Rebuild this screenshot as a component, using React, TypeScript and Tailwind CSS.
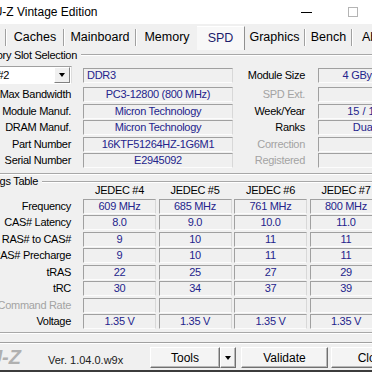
import clsx from "clsx";

const slotRows = [
  { label: "Max Bandwidth", value: "PC3-12800 (800 MHz)", rlabel: "SPD Ext.", rdim: true, rvalue: "" },
  { label: "Module Manuf.", value: "Micron Technology", rlabel: "Week/Year", rdim: false, rvalue: "15 / 15" },
  { label: "DRAM Manuf.", value: "Micron Technology", rlabel: "Ranks", rdim: false, rvalue: "Dual" },
  { label: "Part Number", value: "16KTF51264HZ-1G6M1", rlabel: "Correction", rdim: true, rvalue: "" },
  { label: "Serial Number", value: "E2945092", rlabel: "Registered", rdim: true, rvalue: "" },
];

const timings = [
  { label: "Frequency", values: ["609 MHz", "685 MHz", "761 MHz", "800 MHz"] },
  { label: "CAS# Latency", values: ["8.0", "9.0", "10.0", "11.0"] },
  { label: "RAS# to CAS#", values: ["9", "10", "11", "11"] },
  { label: "RAS# Precharge", values: ["9", "10", "11", "11"] },
  { label: "tRAS", values: ["22", "25", "27", "29"] },
  { label: "tRC", values: ["30", "34", "37", "39"] },
  { label: "Command Rate", values: ["", "", "", ""], dim: true },
  { label: "Voltage", values: ["1.35 V", "1.35 V", "1.35 V", "1.35 V"] },
];

const tabs = [
  { name: "Caches", w: "w-[56px]" },
  { name: "Mainboard", w: "w-[70px]" },
];

function Field({ children, className }: { children?: React.ReactNode; className?: string }) {
  return (
    <div
      className={clsx(
        "flex h-[15px] shrink-0 items-center justify-center whitespace-nowrap border border-t-[#a0a0a0] border-l-[#a0a0a0] border-r-[#d8d8d8] border-b-[#fcfcfc] bg-[#f0f0f0] leading-none text-[#24248c]",
        className
      )}
    >
      {children}
    </div>
  );
}

function Label({ children, className }: { children: React.ReactNode; className?: string }) {
  return (
    <div className={clsx("flex shrink-0 justify-end whitespace-nowrap leading-none", className)}>
      <span>{children}</span>
    </div>
  );
}

function Sep() {
  return <div className="mt-[5px] h-[17px] w-[2px] shrink-0 border-l border-r border-l-[#a0a0a0] border-r-white" />;
}

function GroupTitle({ title, w }: { title: string; w: string }) {
  return (
    <div className="flex h-[12px] items-center">
      <Label className={w}>{title}</Label>
      <div className="ml-[4px] flex-1 border-t border-b border-t-[#a8a8a8] border-b-white" />
    </div>
  );
}

function Button({ children, className }: { children: React.ReactNode; className?: string }) {
  return (
    <div
      className={clsx(
        "flex h-[21px] shrink-0 items-center justify-center border border-t-white border-l-white border-r-[#707070] border-b-[#707070] bg-[#f4f4f4] text-[12px] text-black shadow-[inset_-1px_-1px_0_#b8b8b8]",
        className
      )}
    >
      {children}
    </div>
  );
}

export default function App() {
  return (
    <div className="relative h-[372px] w-[372px] overflow-hidden bg-[#f0f0f0] font-['Liberation_Sans',Arial,sans-serif] text-[11px] tracking-[-0.3px] text-black">
      {/* title bar */}
      <div className="flex h-[24px] items-center bg-white">
        <span className="ml-[-23px] whitespace-nowrap text-[12px] tracking-normal">CPU-Z Vintage Edition</span>
        <div className="ml-auto flex items-center gap-[36px] pr-[14px]">
          <div className="h-px w-[11px] bg-black" />
          <div className="h-[10px] w-[10px] border border-[#b4b4b4]" />
        </div>
      </div>

      {/* tabs */}
      <div className="flex h-[25px] items-start text-[12.5px] tracking-normal">
        <div className="w-[5px] shrink-0" />
        <Sep />
        {tabs.map((t) => (
          <div key={t.name} className="contents">
            <div className={clsx("flex h-full shrink-0 items-center justify-center pt-[2px]", t.w)}>{t.name}</div>
            <Sep />
          </div>
        ))}
        <div className="flex h-full w-[60px] shrink-0 items-center justify-center pt-[2px]">Memory</div>
        <div className="mt-[2px] flex h-[24px] w-[48px] shrink-0 items-center justify-center border-t border-r border-t-white border-r-[#909090] bg-[#f8f8f8] text-[#1c1c6c]">
          SPD
        </div>
        <div className="flex h-full w-[59px] shrink-0 items-center justify-center pt-[2px]">Graphics</div>
        <Sep />
        <div className="flex h-full w-[45px] shrink-0 items-center justify-center pt-[2px]">Bench</div>
        <Sep />
        <div className="flex h-full shrink-0 items-center whitespace-nowrap pl-[9px] pt-[2px]">About</div>
      </div>

      {/* memory slot selection */}
      <GroupTitle title="Memory Slot Selection" w="w-[77px]" />
      <div className="mt-[5px] flex h-[18px] items-center">
        <div className="flex h-[18px] w-[72px] shrink-0 items-center border-t border-r border-b border-t-[#a0a0a0] border-r-[#dcdcdc] border-b-white bg-white">
          <span className="ml-[-23px] whitespace-nowrap">Slot #2</span>
          <div className="ml-auto mr-px flex h-[16px] w-[16px] items-center justify-center border border-t-white border-l-white border-r-[#808080] border-b-[#808080] bg-[#f0f0f0]">
            <div className="h-0 w-0 border-l-[3.5px] border-r-[3.5px] border-t-[4px] border-l-transparent border-r-transparent border-t-black" />
          </div>
        </div>
        <Field className="ml-[11px] w-[150px] justify-start pl-[3px]">DDR3</Field>
        <Label className="w-[72px]">Module Size</Label>
        <Field className="ml-[13px] w-[92px]">4 GBytes</Field>
      </div>
      <div className="mt-[3px] flex flex-col gap-[1.5px]">
        {slotRows.map((r) => (
          <div key={r.label} className="flex h-[15px] items-center">
            <Label className="w-[71px]">{r.label}</Label>
            <Field className="ml-[12px] w-[150px]">{r.value}</Field>
            <Label className={clsx("w-[72px]", r.rdim && "text-[#a3a3a3]")}>{r.rlabel}</Label>
            <Field className="ml-[13px] w-[92px] tracking-normal">{r.rvalue}</Field>
          </div>
        ))}
      </div>
      <div className="mt-[4.5px] border-t border-b border-t-[#a8a8a8] border-b-white" />

      {/* timings table */}
      <div className="mt-px">
        <GroupTitle title="Timings Table" w="w-[38px]" />
      </div>
      <div className="mt-[-3px] flex h-[12px] items-center">
        <div className="w-[83px] shrink-0" />
        <div className="grid grid-cols-[repeat(4,73px)] gap-[2.5px]">
          {["JEDEC #4", "JEDEC #5", "JEDEC #6", "JEDEC #7"].map((h) => (
            <div key={h} className="text-center leading-none whitespace-nowrap">
              {h}
            </div>
          ))}
        </div>
      </div>
      <div className="mt-[2.5px] flex flex-col gap-[1.43px]">
        {timings.map((r) => (
          <div key={r.label} className="flex h-[15px] items-center">
            <Label className={clsx("w-[71px]", r.dim && "text-[#a3a3a3]")}>{r.label}</Label>
            <div className="ml-[12px] grid grid-cols-[repeat(4,73px)] gap-[2.5px]">
              {r.values.map((v, i) => (
                <Field key={i}>{v}</Field>
              ))}
            </div>
          </div>
        ))}
      </div>
      <div className="mt-[3.5px] border-t border-b border-t-[#a8a8a8] border-b-white" />
      <div className="mt-[8px] border-t border-b border-t-[#a0a0a0] border-b-white" />

      {/* footer */}
      <div className="flex h-[27px] items-start">
        <Label className="mt-[3px] w-[21px] text-[20px] font-bold italic tracking-normal text-[#b0b0b0]">CPU-Z</Label>
        <div className="ml-[27px] mt-[11px] w-[102px] shrink-0 whitespace-nowrap leading-none tracking-normal text-[#202020]">
          Ver. 1.04.0.w9x
        </div>
        <div className="mt-[3px] flex shrink-0">
          <Button className="w-[70px] tracking-normal">Tools</Button>
          <Button className="w-[16px]">
            <div className="h-0 w-0 border-l-[3.5px] border-r-[3.5px] border-t-[4px] border-l-transparent border-r-transparent border-t-black" />
          </Button>
          <Button className="ml-[5px] w-[87px] tracking-normal">Validate</Button>
          <Button className="ml-[3px] w-[84px] tracking-normal">Close</Button>
        </div>
      </div>
      <div className="absolute bottom-0 left-0 h-[2px] w-full bg-[#3c3c3c]" />
    </div>
  );
}
